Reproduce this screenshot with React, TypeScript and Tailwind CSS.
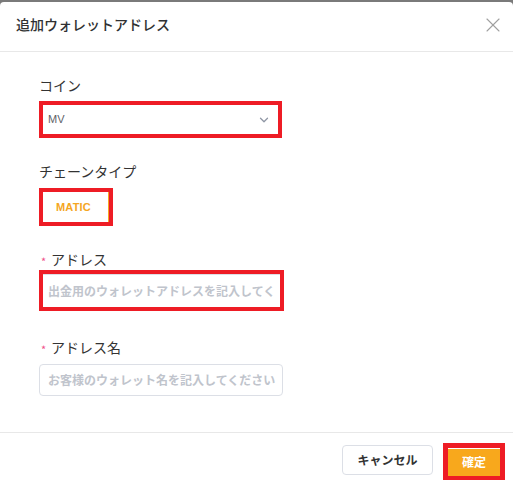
import { ChevronDown, X } from "lucide-react";

const jp = "font-['Noto_Sans_CJK_JP','Noto_Sans',sans-serif]";

function Label({ text, required }: { text: string; required?: boolean }) {
    return (
        <div className="flex items-center h-[22px] text-[14px] text-[#333] leading-[22px]">
            {required && <span className="text-[#f0508a] text-[11px] w-[10px] ml-[2px] mt-[3px]">*</span>}
            <span>{text}</span>
        </div>
    );
}

export default function App() {
    return (
        <div className={`w-[513px] h-[484px] bg-[#7a7a7a] pt-[2px] overflow-hidden ${jp}`}>
            <div className="h-[482px] bg-white rounded-t-[4px] flex flex-col">
                {/* Header */}
                <div className="h-[50px] border-b border-[#e8e8e8] flex items-center justify-between pl-4 pr-[8px]">
                    <span className="text-[14px] font-medium text-[#303133] -mt-[4px]">追加ウォレットアドレス</span>
                    <X className="w-[24px] h-[24px] text-[#a0a0a0] -mt-[4px]" strokeWidth={1.1} />
                </div>

                {/* Body */}
                <div className="flex-1 pl-[39px] pt-[22px]">
                    <Label text="コイン" />
                    <div className="mt-[5px] w-[243px] h-[37px] border-4 border-[#ee1c25] bg-white flex items-center justify-between pl-[5px] pr-[7px]">
                        <span className="text-[11px] text-[#606266] font-['Liberation_Sans',sans-serif]">MV</span>
                        <ChevronDown className="w-[14px] h-[14px] text-[#9097a5]" strokeWidth={2.2} />
                    </div>

                    <div className="mt-[22px]">
                        <Label text="チェーンタイプ" />
                    </div>
                    <div className="mt-[6px] w-[74px] h-[38px] border-4 border-[#ee1c25] bg-white flex items-center">
                        <div className="flex-1 h-full flex items-center pl-[13px] border-r border-[#f5a623]">
                            <span className="text-[11px] font-bold text-[#f5a623] font-['Liberation_Sans',sans-serif] tracking-[0.2px]">MATIC</span>
                        </div>
                    </div>

                    <div className="mt-[22px]">
                        <Label text="アドレス" required />
                    </div>
                    <div className="w-[245px] h-[41px] border-4 border-[#ee1c25] bg-white">
                        <div className="h-full border-t border-[#dcdfe6] flex items-center pl-[5px] overflow-hidden">
                            <span className="text-[12px] font-bold text-[#c0c4cc] whitespace-nowrap">出金用のウォレットアドレスを記入してく</span>
                        </div>
                    </div>

                    <div className="mt-[25px]">
                        <Label text="アドレス名" required />
                    </div>
                    <div className="mt-[6px] w-[244px] h-[32px] border border-[#dcdfe6] rounded-[4px] flex items-center pl-[8px] overflow-hidden">
                        <span className="text-[12px] font-bold text-[#c0c4cc] whitespace-nowrap">お客様のウォレット名を記入してください</span>
                    </div>
                </div>

                {/* Footer */}
                <div className="h-[52px] border-t border-[#e8e8e8] flex justify-end items-start pr-[8px]">
                    <button className="mt-[12px] w-[91px] h-[30px] border border-[#dcdfe6] rounded-[4px] bg-white text-[12px] font-bold text-[#333]">
                        キャンセル
                    </button>
                    <div className="mt-[10px] ml-[10px] w-[62px] h-[37px] border-[5px] border-[#ee1c25]">
                        <button className="w-full h-full bg-[#f8a81c] text-white text-[12px] font-bold">確定</button>
                    </div>
                </div>
            </div>
        </div>
    );
}
